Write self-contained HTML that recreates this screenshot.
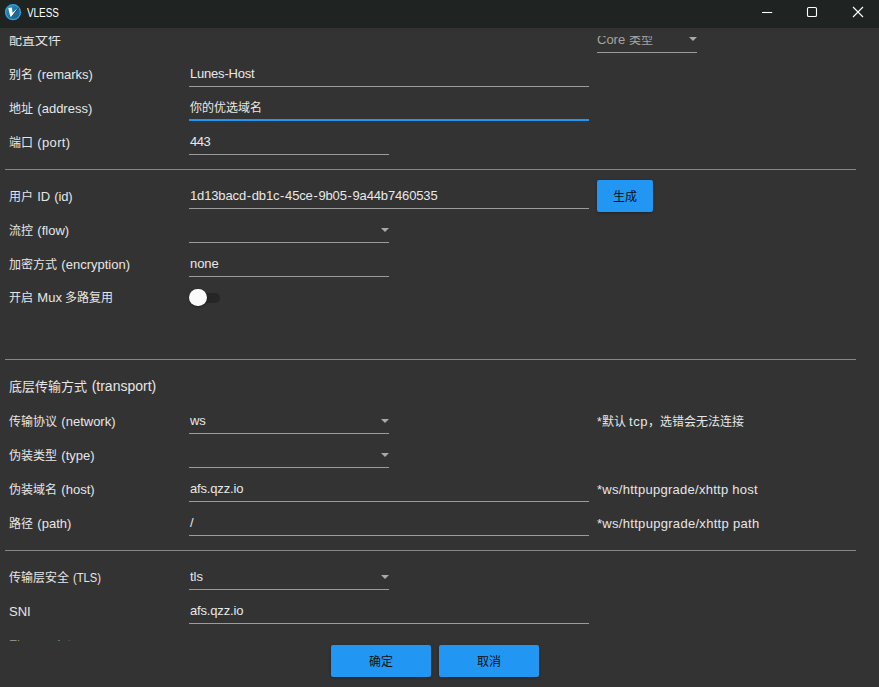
<!DOCTYPE html>
<html lang="zh-CN">
<head>
<meta charset="utf-8">
<title>VLESS</title>
<style>
*{margin:0;padding:0;box-sizing:border-box}
html,body{width:879px;height:687px;overflow:hidden;background:#333333}
body{position:relative;font-family:"Liberation Sans",sans-serif;font-size:12px;color:#e4e4e4;-webkit-font-smoothing:antialiased}
#tb{position:absolute;left:0;top:0;width:879px;height:28px;background:#1f2322}
#tb .t{position:absolute;left:27px;top:5px;height:16px;line-height:16px;font-size:12.5px;color:#fff;white-space:nowrap;transform:scaleX(.79);transform-origin:0 50%}
#view{position:absolute;left:0;top:36px;width:879px;height:605px;overflow:hidden}
#in{position:absolute;left:0;top:-36px;width:879px;height:687px}
.x{position:absolute;height:16px;line-height:16px;white-space:nowrap;font-size:12px}
.lb{left:9px;color:#e6e6e6;word-spacing:1px}
.h{font-size:13px}
.l{font-size:13px;letter-spacing:0}
.lv{font-size:13px;letter-spacing:-.05px}
.hy{margin:0 .75px}
.ln{font-size:13px;letter-spacing:.27px}
.v{left:190px;color:#e8e8e8}
.n{left:597px;color:#e6e6e6}
.u{position:absolute;height:1px;background:#9b9b9b}
.sep{position:absolute;left:5px;width:851px;height:1px;background:#878787}
.ar{position:absolute;width:0;height:0;border-left:4.2px solid transparent;border-right:4.2px solid transparent;border-top:4.4px solid #a9a9a9}
.btn{position:absolute;height:32px;background:#2196f3;border-radius:2px;box-shadow:0 1px 3px rgba(0,0,0,.35);color:#101010;text-align:center;line-height:34.4px;font-size:12px}
</style>
</head>
<body>
<div id="tb">
<svg style="position:absolute;left:5px;top:4px" width="17" height="17" viewBox="0 0 17 17">
<defs><linearGradient id="g" x1="0" y1="0" x2="1" y2="1"><stop offset="0" stop-color="#2d8cc0"/><stop offset="1" stop-color="#175a86"/></linearGradient></defs>
<circle cx="8" cy="8.15" r="8.1" fill="#319fd3"/>
<circle cx="8" cy="8.15" r="6.7" fill="url(#g)"/>
<path d="M6.2 13 L13.8 4.3 L13.2 3.6 L7.9 9.2 Z" fill="#0c2f47"/>
<path d="M3.3 4.1 L6.8 3.6 L7.6 8.7 L13.2 3.5 L6.4 12.6 L5.2 12.4 Z" fill="#fff"/>
</svg>
<div class="t">VLESS</div>
<svg style="position:absolute;left:755px;top:0" width="124" height="28" viewBox="0 0 124 28" fill="none" stroke="#fff" stroke-width="1.1">
<path d="M7 12.5 H17.2"/>
<rect x="52.5" y="7.5" width="9" height="9" rx="1.3"/>
<path d="M98 7 L108 17 M108 7 L98 17"/>
</svg>
</div>
<div id="view"><div id="in">
<div class="x lb h" style="top:31.6px">配置文件</div>
<div class="x n" style="top:31.8px;color:#a4a4a4"><span class="l">Core</span> 类型</div>
<div class="ar" style="left:688.6px;top:37px"></div>
<div class="u" style="left:597px;top:52px;width:100px"></div>

<div class="x lb" style="top:67px">别名 <span class="l">(remarks)</span></div>
<div class="x v" style="top:66px"><span class="lv" style="letter-spacing:-.2px">Lunes-Host</span></div>
<div class="u" style="left:189px;top:86px;width:400px"></div>

<div class="x lb" style="top:101px">地址 <span class="l">(address)</span></div>
<div class="x v" style="top:100px">你的优选域名</div>
<div class="u" style="left:189px;top:119px;width:400px;height:2px;background:#2196f3"></div>

<div class="x lb" style="top:135px">端口 <span class="l" style="letter-spacing:.35px">(port)</span></div>
<div class="x v" style="top:134px"><span class="lv" style="letter-spacing:-.5px">443</span></div>
<div class="u" style="left:189px;top:154px;width:200px"></div>

<div class="sep" style="top:169px"></div>

<div class="x lb" style="top:189px">用户 <span class="l" style="letter-spacing:-.2px">ID (id)</span></div>
<div class="x v" style="top:188px"><span class="lv" style="letter-spacing:-.14px">1d13bacd<span class="hy">-</span>db1c<span class="hy">-</span>45ce<span class="hy">-</span>9b05<span class="hy">-</span>9a44b7460535</span></div>
<div class="u" style="left:189px;top:208px;width:400px"></div>
<div class="btn" style="left:597px;top:180px;width:56px">生成</div>

<div class="x lb" style="top:223px">流控 <span class="l">(flow)</span></div>
<div class="ar" style="left:380.6px;top:228px"></div>
<div class="u" style="left:189px;top:242px;width:200px"></div>

<div class="x lb" style="top:257px">加密方式 <span class="l">(encryption)</span></div>
<div class="x v" style="top:256px"><span class="lv">none</span></div>
<div class="u" style="left:189px;top:276px;width:200px"></div>

<div class="x lb" style="top:290px">开启 <span class="l" style="letter-spacing:.1px;margin-right:-1.7px">Mux</span> 多路复用</div>
<div style="position:absolute;left:191px;top:292.5px;width:29px;height:10.4px;border-radius:5.2px;background:#262626"></div>
<div style="position:absolute;left:189px;top:288.8px;width:17.6px;height:17.6px;border-radius:50%;background:#fafafa;box-shadow:0 1px 2px rgba(0,0,0,.4)"></div>

<div class="sep" style="top:359px"></div>

<div class="x lb h" style="top:378px">底层传输方式 <span class="l" style="font-size:14px">(transport)</span></div>

<div class="x lb" style="top:414px">传输协议 <span class="l">(network)</span></div>
<div class="x v" style="top:413px"><span class="lv">ws</span></div>
<div class="ar" style="left:380.6px;top:419px"></div>
<div class="u" style="left:189px;top:433px;width:200px"></div>
<div class="x n" style="top:414px">*默认 <span class="l" style="letter-spacing:.5px">tcp</span>，选错会无法连接</div>

<div class="x lb" style="top:448px">伪装类型 <span class="l">(type)</span></div>
<div class="ar" style="left:380.6px;top:453px"></div>
<div class="u" style="left:189px;top:467px;width:200px"></div>

<div class="x lb" style="top:482px">伪装域名 <span class="l">(host)</span></div>
<div class="x v" style="top:481px"><span class="lv" style="letter-spacing:-.17px">afs.qzz.io</span></div>
<div class="u" style="left:189px;top:501px;width:400px"></div>
<div class="x n" style="top:482px"><span class="ln">*ws/httpupgrade/xhttp host</span></div>

<div class="x lb" style="top:516px">路径 <span class="l">(path)</span></div>
<div class="x v" style="top:515px"><span class="lv">/</span></div>
<div class="u" style="left:189px;top:535px;width:400px"></div>
<div class="x n" style="top:516px"><span class="ln" style="letter-spacing:.3px">*ws/httpupgrade/xhttp path</span></div>

<div class="sep" style="top:550px"></div>

<div class="x lb" style="top:570px">传输层安全 <span class="l" style="display:inline-block;transform:scaleX(.86);transform-origin:0 50%">(TLS)</span></div>
<div class="x v" style="top:569px"><span class="lv">tls</span></div>
<div class="ar" style="left:380.6px;top:575px"></div>
<div class="u" style="left:189px;top:589px;width:200px"></div>

<div class="x lb" style="top:604px"><span class="l">SNI</span></div>
<div class="x v" style="top:603px"><span class="lv" style="letter-spacing:-.17px">afs.qzz.io</span></div>
<div class="u" style="left:189px;top:623px;width:400px"></div>

<div class="x lb" style="top:637px;opacity:.5"><span class="l">Fingerprint</span></div>
</div></div>
<div class="btn" style="left:331px;top:645px;width:100px">确定</div>
<div class="btn" style="left:439px;top:645px;width:100px">取消</div>
</body>
</html>
